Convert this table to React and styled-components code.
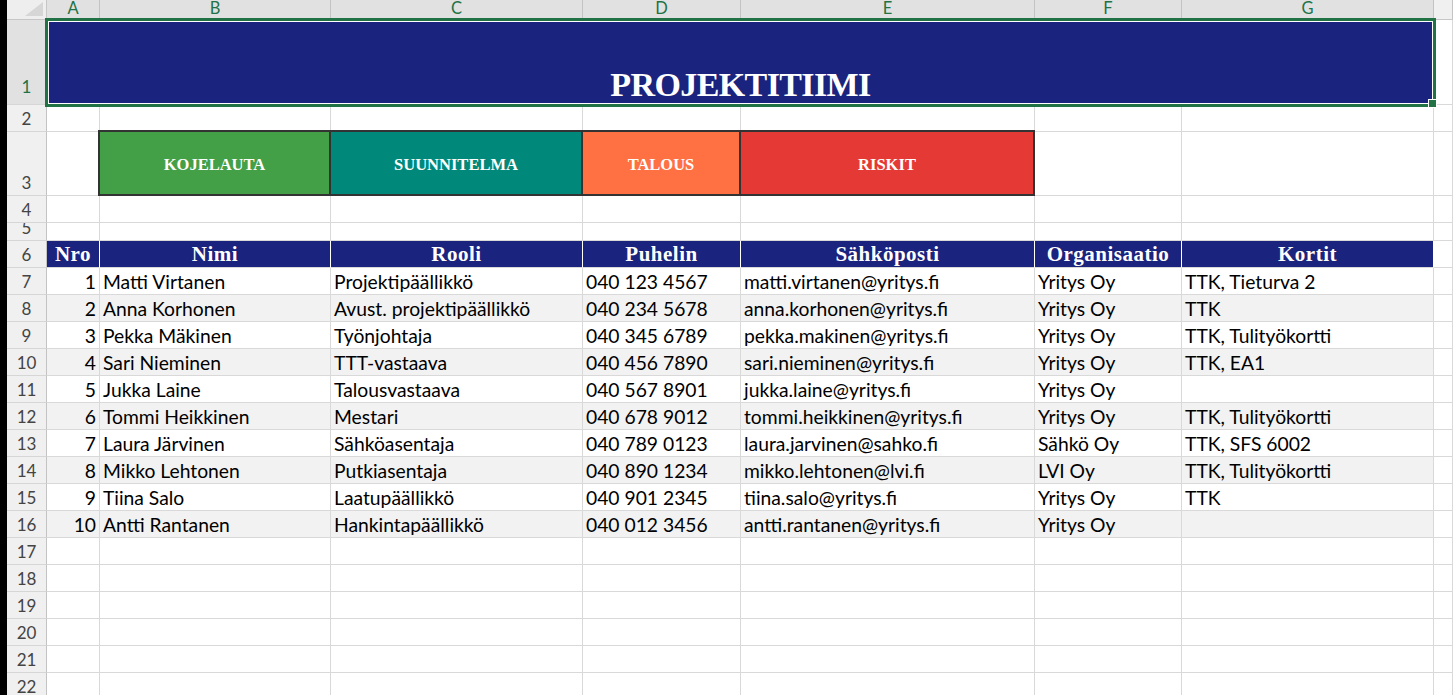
import React from "react";
import styled, { createGlobalStyle } from "styled-components";

const GlobalStyle = createGlobalStyle`
  html, body {
    margin: 0;
    padding: 0;
    background: #ffffff;
    overflow: hidden;
  }
  body {
    font-family: "Lato", "Noto Sans", sans-serif;
  }
`;

const COLUMNS = ["A", "B", "C", "D", "E", "F", "G"];

const NAV = [
  { label: "KOJELAUTA", color: "#43a047" },
  { label: "SUUNNITELMA", color: "#00897b" },
  { label: "TALOUS", color: "#ff7043" },
  { label: "RISKIT", color: "#e53935" },
];

const HEADERS = ["Nro", "Nimi", "Rooli", "Puhelin", "Sähköposti", "Organisaatio", "Kortit"];

const PEOPLE = [
  [1, "Matti Virtanen", "Projektipäällikkö", "040 123 4567", "matti.virtanen@yritys.fi", "Yritys Oy", "TTK, Tieturva 2"],
  [2, "Anna Korhonen", "Avust. projektipäällikkö", "040 234 5678", "anna.korhonen@yritys.fi", "Yritys Oy", "TTK"],
  [3, "Pekka Mäkinen", "Työnjohtaja", "040 345 6789", "pekka.makinen@yritys.fi", "Yritys Oy", "TTK, Tulityökortti"],
  [4, "Sari Nieminen", "TTT-vastaava", "040 456 7890", "sari.nieminen@yritys.fi", "Yritys Oy", "TTK, EA1"],
  [5, "Jukka Laine", "Talousvastaava", "040 567 8901", "jukka.laine@yritys.fi", "Yritys Oy", ""],
  [6, "Tommi Heikkinen", "Mestari", "040 678 9012", "tommi.heikkinen@yritys.fi", "Yritys Oy", "TTK, Tulityökortti"],
  [7, "Laura Järvinen", "Sähköasentaja", "040 789 0123", "laura.jarvinen@sahko.fi", "Sähkö Oy", "TTK, SFS 6002"],
  [8, "Mikko Lehtonen", "Putkiasentaja", "040 890 1234", "mikko.lehtonen@lvi.fi", "LVI Oy", "TTK, Tulityökortti"],
  [9, "Tiina Salo", "Laatupäällikkö", "040 901 2345", "tiina.salo@yritys.fi", "Yritys Oy", "TTK"],
  [10, "Antti Rantanen", "Hankintapäällikkö", "040 012 3456", "antti.rantanen@yritys.fi", "Yritys Oy", ""],
];

const EMPTY_ROWS = [17, 18, 19, 20, 21, 22];

const Page = styled.div`
  display: flex;
  width: 1453px;
  height: 695px;
  overflow: hidden;
`;

const Frame = styled.div`
  width: 7px;
  flex: none;
  background: #000000;
`;

const Sheet = styled.div`
  flex: 1;
  display: grid;
  grid-template-columns: 40px 53px 231px 252px 158px 294px 147px 252px 1fr;
  grid-template-rows: 20px 85px 27px 64px 27px 18px 27px repeat(16, 27px);
  align-content: start;
`;

const Corner = styled.div`
  position: relative;
  background: #eeeeee;
  border-right: 1px solid #c6c6c6;
  border-bottom: 1px solid #c6c6c6;
  box-sizing: border-box;
  &::after {
    content: "";
    position: absolute;
    right: 3px;
    bottom: 3px;
    border-style: solid;
    border-width: 0 0 14px 18px;
    border-color: transparent transparent #d6d6d6 transparent;
  }
`;

const ColHead = styled.div`
  display: flex;
  align-items: flex-start;
  justify-content: center;
  box-sizing: border-box;
  background: ${(p) => (p.$selected ? "#e1e1e1" : "#f0f0f0")};
  color: ${(p) => (p.$selected ? "#217346" : "#444444")};
  border-right: 1px solid #c3c3c3;
  border-bottom: 1px solid #c6c6c6;
  font-family: "Lato", sans-serif;
  font-size: 16.5px;
  line-height: 17px;
`;

const RowHead = styled.div`
  display: flex;
  align-items: flex-end;
  justify-content: center;
  padding-bottom: ${(p) => (p.$selected ? "7px" : "2px")};
  box-sizing: border-box;
  overflow: hidden;
  background: ${(p) => (p.$selected ? "#e1e1e1" : "#f0f0f0")};
  color: ${(p) => (p.$selected ? "#217346" : "#444444")};
  border-right: 1px solid #c3c3c3;
  border-bottom: 1px solid #d6d6d6;
  font-family: "Lato", sans-serif;
  font-size: 17px;
  line-height: 20px;
`;

const Cell = styled.div`
  display: flex;
  align-items: flex-end;
  justify-content: ${(p) => (p.$right ? "flex-end" : "flex-start")};
  padding: 0 3px 1px 3px;
  box-sizing: border-box;
  overflow: hidden;
  white-space: nowrap;
  background: ${(p) => (p.$shade ? "#f2f2f2" : "#ffffff")};
  color: #000000;
  border-right: 1px solid #d9d9d9;
  border-bottom: 1px solid #d9d9d9;
  font-family: "Lato", sans-serif;
  font-size: 19.3px;
  line-height: 22px;
`;

const TitleCell = styled.div`
  grid-column: 2 / 9;
  position: relative;
  display: flex;
  align-items: flex-end;
  justify-content: center;
  padding-bottom: 3px;
  box-sizing: border-box;
  background: #1a237e;
  color: #ffffff;
  font-family: "Liberation Serif", "Times New Roman", serif;
  font-weight: 700;
  font-size: 34px;
  letter-spacing: -0.6px;
  line-height: 1;
`;

const Selection = styled.div`
  position: absolute;
  top: -2px;
  left: -2px;
  right: -2px;
  bottom: -2px;
  border: 3px solid #217346;
  box-shadow: inset 0 0 0 1px #ffffff;
  pointer-events: none;
`;

const FillHandle = styled.div`
  position: absolute;
  right: -4px;
  bottom: -4px;
  width: 7px;
  height: 7px;
  background: #217346;
  border: 1px solid #ffffff;
`;

const NavButton = styled.div`
  margin: -2px 0 0 -2px;
  display: flex;
  align-items: center;
  justify-content: center;
  box-sizing: border-box;
  border: 2px solid #333333;
  background: ${(p) => p.$color};
  color: #ffffff;
  font-family: "Liberation Serif", "Times New Roman", serif;
  font-weight: 700;
  font-size: 16.5px;
  padding-top: 4px;
`;

const HeadCell = styled.div`
  display: flex;
  align-items: flex-end;
  justify-content: center;
  padding-bottom: 2px;
  box-sizing: border-box;
  overflow: hidden;
  white-space: nowrap;
  background: #1a237e;
  color: #ffffff;
  border-right: 1px solid #ffffff;
  border-bottom: 1px solid #d9d9d9;
  font-family: "Liberation Serif", "Times New Roman", serif;
  font-weight: 700;
  font-size: 21px;
  letter-spacing: 0.5px;
  line-height: 1;
`;

function BlankCells({ count }) {
  return Array.from({ length: count }, (_, i) => <Cell key={i} />);
}

export default function App() {
  return (
    <>
      <GlobalStyle />
      <Page>
        <Frame />
        <Sheet>
          <Corner />
          {COLUMNS.map((c) => (
            <ColHead key={c} $selected>
              {c}
            </ColHead>
          ))}
          <ColHead />

          <RowHead $selected>1</RowHead>
          <TitleCell>
            PROJEKTITIIMI
            <Selection>
              <FillHandle />
            </Selection>
          </TitleCell>
          <Cell />

          <RowHead>2</RowHead>
          <BlankCells count={8} />

          <RowHead>3</RowHead>
          <Cell />
          {NAV.map((n) => (
            <NavButton key={n.label} $color={n.color}>
              {n.label}
            </NavButton>
          ))}
          <BlankCells count={3} />

          <RowHead>4</RowHead>
          <BlankCells count={8} />

          <RowHead>5</RowHead>
          <BlankCells count={8} />

          <RowHead>6</RowHead>
          {HEADERS.map((h) => (
            <HeadCell key={h}>{h}</HeadCell>
          ))}
          <Cell />

          {PEOPLE.map((row, i) => (
            <React.Fragment key={row[0]}>
              <RowHead>{i + 7}</RowHead>
              {row.map((value, j) => (
                <Cell key={j} $right={j === 0} $shade={i % 2 === 1}>
                  {value}
                </Cell>
              ))}
              <Cell />
            </React.Fragment>
          ))}

          {EMPTY_ROWS.map((n) => (
            <React.Fragment key={n}>
              <RowHead>{n}</RowHead>
              <BlankCells count={8} />
            </React.Fragment>
          ))}
        </Sheet>
      </Page>
    </>
  );
}
